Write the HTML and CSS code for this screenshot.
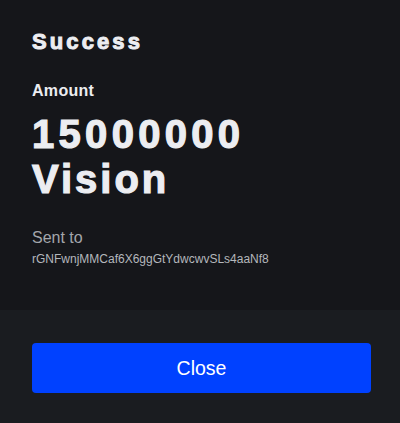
FILE: index.html
```html
<!DOCTYPE html>
<html lang="en">
<head>
<meta charset="utf-8">
<title>Success</title>
<link rel="stylesheet" href="styles.css">
</head>
<body>
<div class="modal">
  <section class="content">
    <h2 class="title">Success</h2>
    <div class="label">Amount</div>
    <h1 class="amount"><span class="amount-num">15000000</span> <span class="amount-unit">Vision</span></h1>
    <div class="sent-label">Sent to</div>
    <div class="address">rGNFwnjMMCaf6X6ggGtYdwcwvSLs4aaNf8</div>
  </section>
  <footer class="actions">
    <button class="close-btn" type="button">Close</button>
  </footer>
</div>
</body>
</html>
```

FILE: styles.css
```css
* { box-sizing: border-box; }
html, body {
  margin: 0;
  padding: 0;
  background: #15161a;
  font-family: "Liberation Sans", Arial, sans-serif;
}
.modal {
  width: 400px;
  height: 423px;
  display: flex;
  flex-direction: column;
}
.content {
  background: #15161a;
  padding: 29px 29px 0 32px;
  height: 310px;
  color: #ecedf1;
}
.title {
  margin: 0;
  font-size: 22px;
  line-height: 26px;
  font-weight: 700;
  letter-spacing: 3.1px;
  -webkit-text-stroke: 1px #ecedf1;
}
.label {
  margin-top: 26px;
  font-size: 16px;
  line-height: 20px;
  font-weight: 700;
  letter-spacing: 0.3px;
}
.amount {
  margin: 11px 0 0;
  font-size: 40px;
  line-height: 45px;
  font-weight: 700;
  -webkit-text-stroke: 1.2px #ecedf1;
}
.amount-num { letter-spacing: 4.3px; }
.amount-unit { letter-spacing: 3px; }
.sent-label {
  margin-top: 26px;
  font-size: 16px;
  line-height: 20px;
  color: #a3a6ab;
}
.address {
  margin-top: 4px;
  font-size: 12px;
  line-height: 14px;
  color: #b4b7bc;
}
.actions {
  flex: 1;
  background: #1a1c20;
  padding: 33px 29px 0 32px;
}
.close-btn {
  display: block;
  width: 100%;
  height: 50px;
  border: none;
  border-radius: 4px;
  background: #0041ff;
  color: #ffffff;
  font-family: "Liberation Sans", Arial, sans-serif;
  font-size: 19.5px;
  cursor: pointer;
}
```
